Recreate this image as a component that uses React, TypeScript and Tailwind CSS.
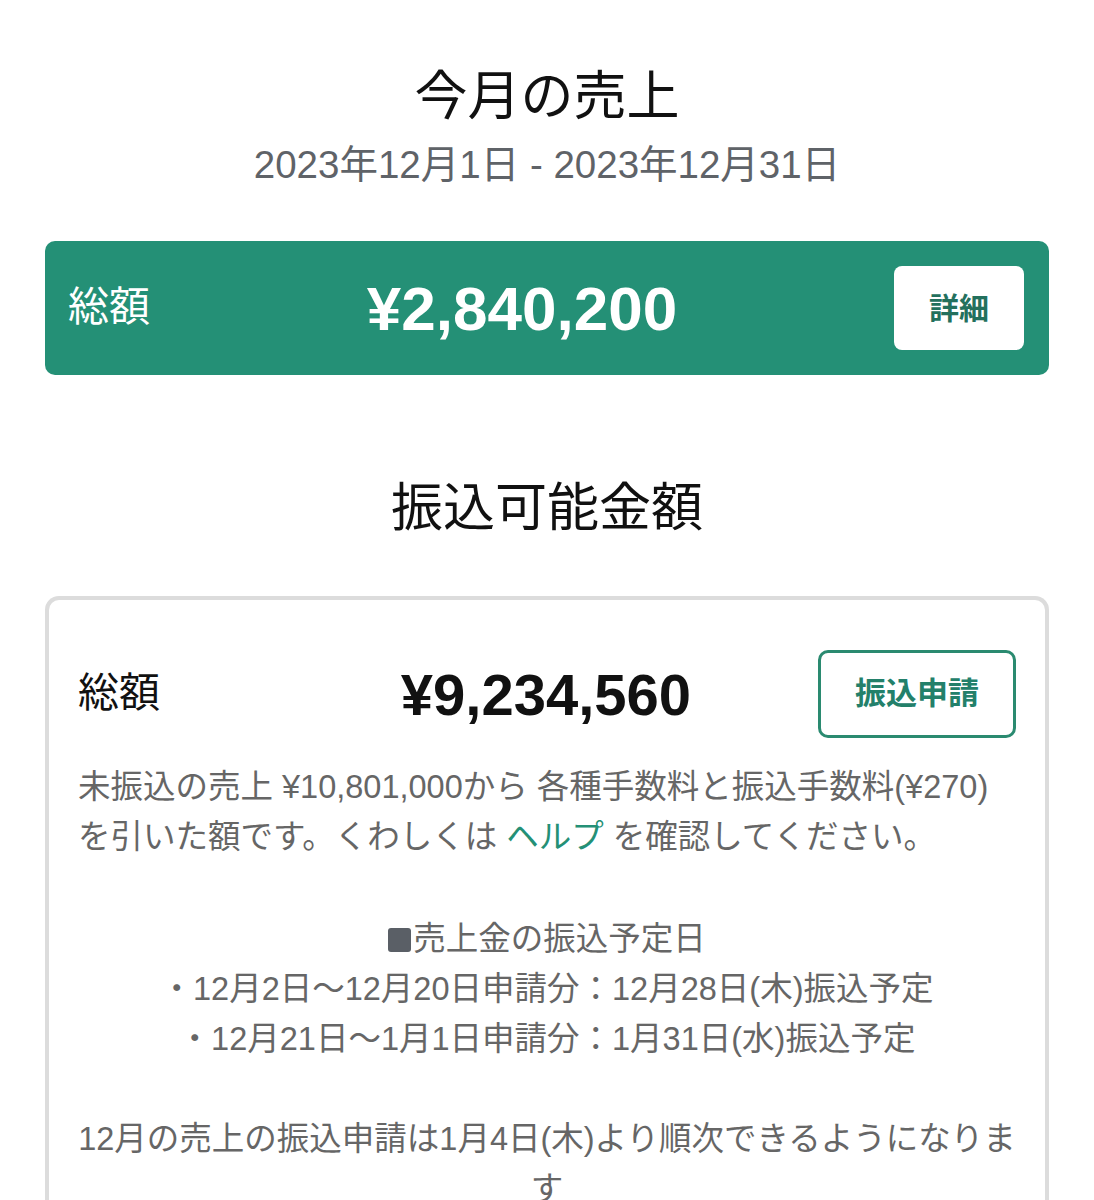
import React from 'react';

const jp = { fontFamily: '"Liberation Sans", "Noto Sans CJK JP", sans-serif' };

const App = () => {
  return (
    <div className="min-h-[1200px] bg-white px-[45px] pt-[62px]" style={jp}>
      <h1 className="text-center text-[53px] leading-[70px] font-normal text-[#111111]">今月の売上</h1>
      <p className="mt-[8px] text-center text-[38.5px] leading-[50px] text-[#5f6368]">
        2023年12月1日 - 2023年12月31日
      </p>

      <div className="mt-[51px] flex h-[134px] items-center rounded-[10px] bg-[#249076] pl-[23px] pr-[25px]">
        <span className="text-[41px] text-white">総額</span>
        <span className="flex-1 text-center text-[62px] font-bold text-white">¥2,840,200</span>
        <button className="flex h-[84px] w-[130px] items-center justify-center rounded-[8px] bg-white text-[30px] font-bold text-[#23705d]">
          詳細
        </button>
      </div>

      <h2 className="mt-[98px] text-center text-[52px] leading-[70px] font-normal text-[#111111]">振込可能金額</h2>

      <div className="mt-[53px] rounded-t-[14px] border-[4px] border-b-0 border-[#dcdcdc] px-[29px] pt-[50px] pb-[40px]">
        <div className="flex items-center">
          <span className="w-[196px] text-[41px] text-[#111111]">総額</span>
          <span className="flex-1 text-center text-[58px] font-bold text-[#111111]">¥9,234,560</span>
          <button className="flex h-[88px] w-[198px] items-center justify-center rounded-[10px] border-[3px] border-[#2a8a70] text-[31px] font-bold text-[#23806a]">
            振込申請
          </button>
        </div>

        <p className="mt-[24px] text-[32.5px] leading-[50px] text-[#666666]">
          未振込の売上 ¥10,801,000から 各種手数料と振込手数料(¥270) を引いた額です。くわしくは
          <a className="text-[#249076]"> ヘルプ </a>を確認してください。
        </p>

        <div className="mt-[52px] text-center text-[32.5px] leading-[50px] text-[#666666]">
          <p>
            <span className="mr-[2px] inline-block h-[24px] w-[23px] rounded-[3px] bg-[#5a5f66] align-[-2px]" />
            売上金の振込予定日
          </p>
          <p>・12月2日〜12月20日申請分：12月28日(木)振込予定</p>
          <p>・12月21日〜1月1日申請分：1月31日(水)振込予定</p>
          <p className="mt-[50px]">12月の売上の振込申請は1月4日(木)より順次できるようになります</p>
        </div>
      </div>
    </div>
  );
};

export default App;
